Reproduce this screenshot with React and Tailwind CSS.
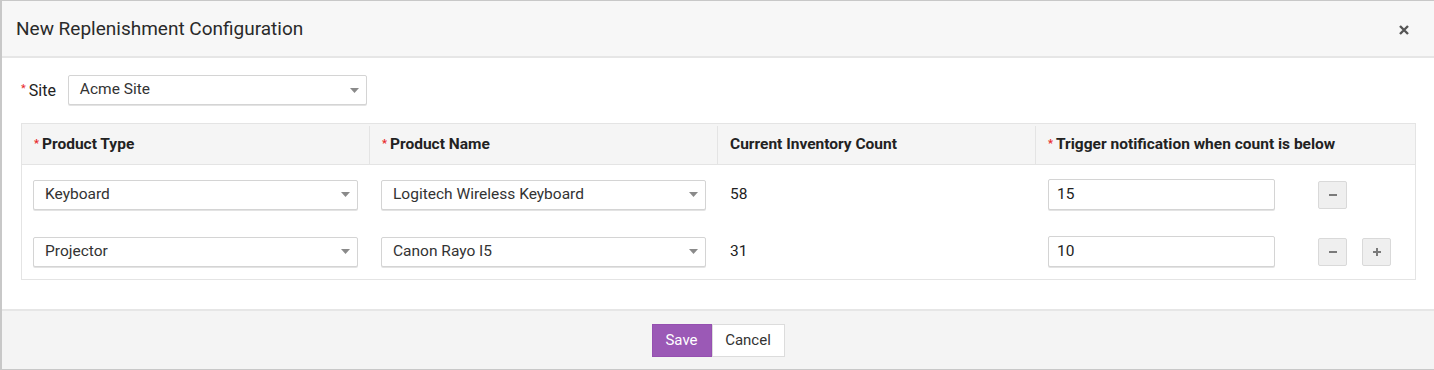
import React from "react";

const Caret = () => (
  <svg width="9" height="5" viewBox="0 0 9 5" className="shrink-0">
    <path d="M0 0 L9 0 L4.5 5 Z" fill="#8a8a8a" />
  </svg>
);

const Star = () => <span className="text-[#e8262b] text-[11px] mr-[3px] relative top-[-1px]">*</span>;

const Select = ({ value, w }) => (
  <div className={`h-[30px] ${w} border border-[#d4d4d4] rounded-[2px] bg-white flex items-center justify-between pl-[11px] pr-[7px] shadow-[0_1px_0_#e3e3e3]`}>
    <span className="text-[15.5px] text-[#333]">{value}</span>
    <Caret />
  </div>
);

const Input = ({ value }) => (
  <div className="h-[31px] w-[227px] border border-[#d4d4d4] rounded-[2px] bg-white flex items-center pl-[8px] shadow-[0_1px_0_#e3e3e3]">
    <span className="text-[15.5px] text-[#222]">{value}</span>
  </div>
);

const IconBtn = ({ plus }) => (
  <div className="w-[29px] h-[28px] bg-[#efefef] border border-[#d9d9d9] rounded-[2px] flex items-center justify-center">
    <svg width="10" height="10" viewBox="0 0 10 10">
      <path d="M1 5 H9" stroke="#7a7a7a" strokeWidth="2" />
      {plus && <path d="M5 1 V9" stroke="#7a7a7a" strokeWidth="2" />}
    </svg>
  </div>
);

const rows = [
  { type: "Keyboard", name: "Logitech Wireless Keyboard", count: "58", trig: "15", plus: false },
  { type: "Projector", name: "Canon Rayo I5", count: "31", trig: "10", plus: true },
];

export default function App() {
  return (
    <div className="w-[1434px] h-[370px] bg-white border-l-2 border-t border-b border-[#c8c8c8] flex flex-col font-['Roboto',sans-serif] text-[#333] overflow-hidden">
      <div className="h-[57px] shrink-0 bg-[#f7f7f7] border-b-2 border-[#e6e6e6] flex items-center justify-between pl-[14px] pr-[25px] pt-[2px]">
        <span className="text-[19px] text-[#2a2a2a]">New Replenishment Configuration</span>
        <svg width="10" height="10" viewBox="0 0 10 10">
          <path d="M1 1 L9 9 M9 1 L1 9" stroke="#555" strokeWidth="2.4" />
        </svg>
      </div>

      <div className="flex-1 px-[19px] pt-[17px]">
        <div className="flex items-center">
          <Star />
          <span className="text-[16px] text-[#222] mr-[12px] relative top-[1px]">Site</span>
          <Select value="Acme Site" w="w-[299px]" />
        </div>

        <div className="mt-[18px] border border-[#e4e4e4] w-[1395px]">
          <div className="grid grid-cols-[348px_348px_318px_1fr] h-[41px] bg-[#f5f5f5] border-b border-[#e4e4e4] text-[15.5px] font-bold text-[#222] pt-[2px]">
            <div className="flex items-center pl-[12px] border-r border-[#e4e4e4]"><Star />Product Type</div>
            <div className="flex items-center pl-[12px] border-r border-[#e4e4e4]"><Star />Product Name</div>
            <div className="flex items-center pl-[12px] border-r border-[#e4e4e4]">Current Inventory Count</div>
            <div className="flex items-center pl-[12px]"><Star />Trigger notification when count is below</div>
          </div>
          <div className="flex flex-col gap-[26px] pt-[14px] pb-[12px]">
            {rows.map((r) => (
              <div key={r.type} className="grid grid-cols-[348px_348px_318px_1fr] items-center">
                <div className="pl-[11px]"><Select value={r.type} w="w-[325px]" /></div>
                <div className="pl-[11px]"><Select value={r.name} w="w-[325px]" /></div>
                <div className="pl-[12px] text-[15.5px] text-[#222]">{r.count}</div>
                <div className="pl-[12px] flex items-center">
                  <Input value={r.trig} />
                  <div className="ml-[43px] flex gap-[15px]">
                    <IconBtn />
                    {r.plus && <IconBtn plus />}
                  </div>
                </div>
              </div>
            ))}
          </div>
        </div>
      </div>

      <div className="h-[60px] shrink-0 bg-[#f4f4f4] border-t-2 border-[#e6e6e6] flex items-center justify-center">
        <div className="flex">
          <div className="w-[60px] h-[33px] bg-[#9b59b6] border border-[#9550b0] text-white text-[15px] flex items-center justify-center">Save</div>
          <div className="w-[73px] h-[33px] bg-white border border-[#dcdcdc] text-[#333] text-[15px] flex items-center justify-center">Cancel</div>
        </div>
      </div>
    </div>
  );
}
